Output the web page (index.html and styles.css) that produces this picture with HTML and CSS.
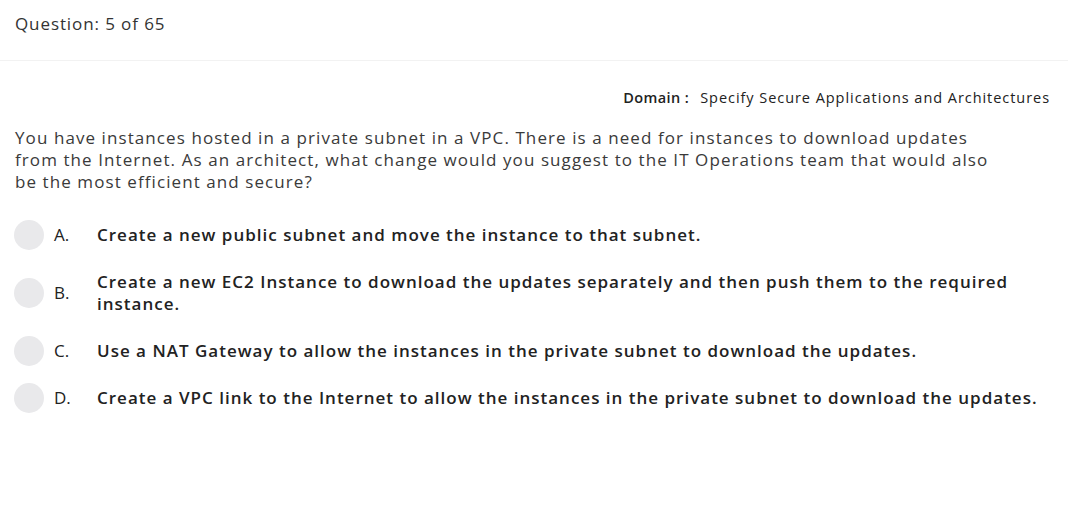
FILE: index.html
```html
<!DOCTYPE html>
<html>
<head>
<meta charset="utf-8">
<link rel="stylesheet" href="styles.css">
</head>
<body>
<header class="top">
  <div class="qnum">Question: 5 of 65</div>
</header>
<main class="content">
  <div class="domain"><span class="domain-label">Domain :</span><span class="domain-value">Specify Secure Applications and Architectures</span></div>
  <p class="question">You have instances hosted in a private subnet in a VPC. There is a need for instances to download updates from the Internet. As an architect, what change would you suggest to the IT Operations team that would also be the most efficient and secure?</p>
  <ul class="options">
    <li class="option"><span class="radio"></span><span class="letter">A.</span><span class="text">Create a new public subnet and move the instance to that subnet.</span></li>
    <li class="option"><span class="radio"></span><span class="letter">B.</span><span class="text">Create a new EC2 Instance to download the updates separately and then push them to the required instance.</span></li>
    <li class="option"><span class="radio"></span><span class="letter">C.</span><span class="text">Use a NAT Gateway to allow the instances in the private subnet to download the updates.</span></li>
    <li class="option"><span class="radio"></span><span class="letter">D.</span><span class="text">Create a VPC link to the Internet to allow the instances in the private subnet to download the updates.</span></li>
  </ul>
</main>
</body>
</html>
```
FILE: styles.css
```css
* { box-sizing: border-box; }
body {
  margin: 0;
  background: #fff;
  font-family: "Open Sans", "Liberation Sans", sans-serif;
  color: #333;
}
.top {
  height: 61px;
  border-bottom: 1px solid #f2f2f2;
  padding: 12px 15px 0;
}
.qnum {
  font-size: 17px;
  line-height: 24px;
  letter-spacing: 0.9px;
  color: #333;
}
.content {
  padding: 27px 18px 0 15px;
}
.domain {
  display: flex;
  justify-content: flex-end;
  gap: 11px;
  font-size: 14.5px;
  line-height: 20px;
  letter-spacing: 0.95px;
  color: #222;
}
.domain-label { font-weight: 600; letter-spacing: 0.4px; }
.question {
  margin: 19px 0 0;
  font-size: 17px;
  line-height: 22px;
  letter-spacing: 1.08px;
  color: #3a3a3a;
  max-width: 992px;
}
.options {
  list-style: none;
  margin: 27px 0 0;
  padding: 0;
  display: flex;
  flex-direction: column;
  gap: 17px;
}
.option {
  display: flex;
  align-items: center;
  min-height: 30px;
  font-size: 17px;
  line-height: 22px;
  color: #222;
  font-weight: 600;
  letter-spacing: 1px;
}
.radio {
  flex: none;
  width: 30px;
  height: 30px;
  border-radius: 50%;
  background: #e9e9eb;
  margin-left: -1px;
  margin-right: 10px;
}
.letter {
  flex: none;
  width: 43px;
  font-weight: 500;
  letter-spacing: 0;
}
.text {
  flex: 1;
  padding: 4px 0;
}
```
